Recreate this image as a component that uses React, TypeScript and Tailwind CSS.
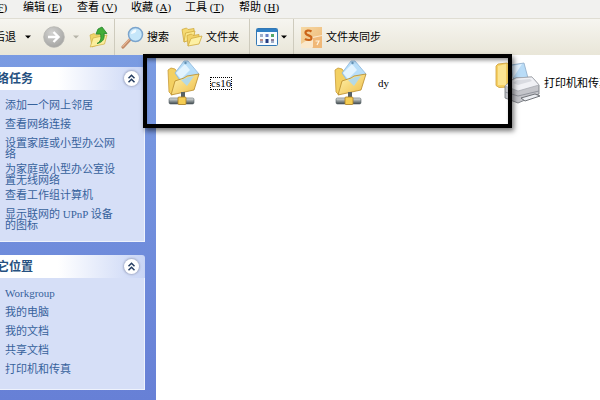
import type { ReactNode } from 'react';

const menus = [
  { label: '文件', hotkey: 'F' },
  { label: '编辑', hotkey: 'E' },
  { label: '查看', hotkey: 'V' },
  { label: '收藏', hotkey: 'A' },
  { label: '工具', hotkey: 'T' },
  { label: '帮助', hotkey: 'H' },
];

const networkTasks = [
  '添加一个网上邻居',
  '查看网络连接',
  '设置家庭或小型办公网络',
  '为家庭或小型办公室设置无线网络',
  '查看工作组计算机',
  '显示联网的 UPnP 设备的图标',
];

const otherPlaces = ['Workgroup', '我的电脑', '我的文档', '共享文档', '打印机和传真'];

function Caret({ muted = false }: { muted?: boolean }) {
  return (
    <svg className={`h-1 w-[6px] shrink-0 ${muted ? 'fill-[#b5b3a8]' : 'fill-black'}`} viewBox="0 0 6 4">
      <path d="M0 .5h6L3 3.5z" />
    </svg>
  );
}

function ForwardIcon() {
  return (
    <svg className="size-[22px]" viewBox="0 0 22 22">
      <defs>
        <radialGradient id="fwd" cx=".4" cy=".3" r=".8">
          <stop offset="0" stopColor="#d2d2d0" />
          <stop offset="1" stopColor="#a0a09e" />
        </radialGradient>
      </defs>
      <circle cx="11" cy="11" r="10.3" fill="url(#fwd)" stroke="#b2b2ae" strokeWidth=".8" />
      <path d="M5 11h10M10.500 6l5 5-5 5" fill="none" stroke="#fff" strokeWidth="2.400" />
    </svg>
  );
}

function UpFolderIcon() {
  return (
    <svg className="h-[22px] w-[19px]" viewBox="0 0 19 22">
      <path d="M1 9l4-1.500L7 9l8-1.500v9L3 21z" fill="#efd568" stroke="#d0ae45" strokeWidth=".7" />
      <path d="M1.200 21L4 12l14-3-2.500 9z" fill="#fbee9c" stroke="#cfae45" strokeWidth=".7" />
      <path d="M8 17.500c3.500-1.500 4.500-5 3.500-9.500H7L9 3l4-2 5 6.500h-3c1 5.500-1.500 9-7 10z" fill="#41ad38" stroke="#23832a" strokeWidth=".8" />
    </svg>
  );
}

function SearchIcon() {
  return (
    <svg className="h-[23px] w-[23px]" viewBox="0 0 23 23">
      <path d="M2 21l7.500-8" stroke="#c08a67" strokeWidth="3.200" strokeLinecap="round" />
      <path d="M1.800 20.300l7-7.500" stroke="#e7b794" strokeWidth="1.200" strokeLinecap="round" />
      <circle cx="14.500" cy="8.500" r="7" fill="#c5e6fa" stroke="#7ba4cc" strokeWidth="1.500" />
      <path d="M10 8c.3-3 2.500-4.500 5-4.500 1 2-1 4-5 4.500z" fill="#f4fbff" />
    </svg>
  );
}

function FoldersIcon() {
  return (
    <svg className="h-[20px] w-[22px]" viewBox="0 0 22 20" stroke="#cfa93f" strokeWidth=".8" strokeLinejoin="round">
      <path d="M1 2.500L5.500 1 7 2.500 13 1.500V10L3 15z" fill="#f5da72" />
      <path d="M3 15L4.500 6l9.500-2-2 8z" fill="#fbe88c" />
      <path d="M6 8.500L10.500 7 12 8.500l6-1V10L7 19z" fill="#f2d268" />
      <path d="M7 19l3-7.500L21 9l-3 8z" fill="#fdf0a4" />
    </svg>
  );
}

function ViewsIcon() {
  return (
    <svg className="h-[18px] w-[22px]" viewBox="0 0 22 18">
      <rect x=".5" y=".5" width="21" height="17" rx="1" fill="#f7fbff" stroke="#3378b5" />
      <path d="M1 1h20v3H1z" fill="#2f7fc3" />
      <path d="M4 6h3v3H4zM4 13h3v2H4zM15 13h3v2h-3z" fill="#9dadc9" />
      <path d="M9.500 6h3v3h-3z" fill="#697fc5" />
      <path d="M15 6h3v3h-3z" fill="#50a668" />
      <path d="M9.500 11h3v4h-3z" fill="#263c80" />
      <path d="M4 11h3v2H4z" fill="#c08b86" />
      <path d="M15 11h3v2h-3z" fill="#8a7d9a" />
    </svg>
  );
}

function SyncIcon() {
  return (
    <svg className="size-[21px]" viewBox="0 0 21 21">
      <defs>
        <linearGradient id="sync" x2="1" y2="1">
          <stop offset="0" stopColor="#f6d9a4" />
          <stop offset="1" stopColor="#edb673" />
        </linearGradient>
      </defs>
      <path d="M0 0h21v21H0z" fill="url(#sync)" />
      <path d="M0 17l11-7 10-2v4L11 21H0z" fill="#fae8cc" />
      <path d="M12 11l9-2v12h-9z" fill="#f0b878" />
      <path d="M10.500 4.500C8 2.800 4.500 3.300 4.500 5.700c0 3 6 2.300 6 5.200 0 2.500-4 2.700-6.500 1" fill="none" stroke="#cb6519" strokeWidth="2.200" />
      <path d="M14.500 14H18l-2 4" fill="none" stroke="#fff4e0" strokeWidth="1.200" />
    </svg>
  );
}

function NetworkFolderIcon() {
  return (
    <svg className="h-[46px] w-[34px] shrink-0" viewBox="0 0 34 46">
      <defs>
        <linearGradient id="folder" x2="1" y2="1">
          <stop offset="0" stopColor="#fff3ae" />
          <stop offset="1" stopColor="#eebd48" />
        </linearGradient>
        <linearGradient id="pipe" x2="0" y2="1">
          <stop offset="0" stopColor="#e5e8e6" />
          <stop offset=".5" stopColor="#91999a" />
          <stop offset="1" stopColor="#3e474a" />
        </linearGradient>
      </defs>
      <path d="M1 10l3-2 4 1 3 4 8 8-14 14-3-3z" fill="#f3d062" stroke="#c89b38" strokeWidth=".8" />
      <path d="M17 1h4l11 13-13 15L8 13z" fill="#b8def9" stroke="#8cb6dc" strokeWidth=".8" />
      <path d="M18 4l5 6-9 9-5-6z" fill="#e3f4ff" />
      <circle cx="18.500" cy="3" r="1.200" fill="#6796bb" />
      <path d="M4 35l4-14 9-3 3-2 12-2-5 16z" fill="url(#folder)" stroke="#b78a29" strokeWidth=".8" strokeLinejoin="round" />
      <path d="M14 20l4-1.500L21 17l6-1-7 10z" fill="#b4d9e6" />
      <path d="M14 32h4v8h-4z" fill="#596264" />
      <rect x="2" y="38" width="25" height="6" rx="1.500" fill="url(#pipe)" stroke="#566065" strokeWidth=".6" />
      <rect x="11" y="37" width="8" height="7.500" rx="1" fill="#f5cd53" stroke="#ac7f22" strokeWidth=".8" />
    </svg>
  );
}

function PrinterIcon() {
  return (
    <svg className="h-[46px] w-[46px] shrink-0" viewBox="0 0 46 46">
      <path d="M1 6l2-2 9-1 3 2v22l-11 .5-3-2z" fill="#f5cf62" stroke="#d1a13b" strokeWidth=".8" />
      <path d="M3 6l8-2v21H3z" fill="#fbe492" />
      <path d="M16 5l13-2 4 15-14 5z" fill="#b9dcf7" stroke="#8facc8" strokeWidth=".8" />
      <path d="M17 6l10-2-9 14z" fill="#e4f3ff" />
      <path d="M10 26l7-6 4-2 16-1 7 8v9L23 43l-13-5z" fill="#c4c5ca" stroke="#70737a" strokeWidth=".8" />
      <path d="M10 26l7-6 4-2 16-1 7 8-21 6z" fill="#f0f1f5" stroke="#a4a6ad" strokeWidth=".7" />
      <path d="M18 23l4-3 13-1 2 2-14 4z" fill="#d9dbe1" />
      <path d="M10 32l13 4 21-5" fill="none" stroke="#93969e" />
      <path d="M26 38l14-4 5 2-15 5z" fill="#eceef2" stroke="#63666c" strokeWidth=".9" />
    </svg>
  );
}

function Separator() {
  return <div className="w-px self-stretch bg-[#cecbbd]" />;
}

function TaskPanel({ title, children }: { title: string; children: ReactNode }) {
  return (
    <section className="mr-[11px]">
      <header className="flex h-[23px] items-center justify-between rounded-tr-[3px] bg-linear-to-r from-white from-40% to-[#c9d5f5] pr-[6px]">
        <h2 className="-ml-[15px] text-[12px] leading-4 font-bold whitespace-nowrap text-[#255080]">{title}</h2>
        <button
          type="button"
          aria-label={`折叠${title}`}
          className="flex size-[15px] items-center justify-center rounded-full bg-white shadow-[0_0_2px_1px_#a5aec9]"
        >
          <svg className="size-[9px]" viewBox="0 0 9 9" fill="none" stroke="#253d62" strokeWidth="1.500">
            <path d="M1.500 4.200l3-3 3 3M1.500 8.200l3-3 3 3" />
          </svg>
        </button>
      </header>
      <div className="border-r border-b border-[#eef2fc] bg-[#d6dff7] pt-[10px] pr-6 pb-[10px] pl-[5px]">{children}</div>
    </section>
  );
}

function LinkList({ items }: { items: string[] }) {
  return (
    <ul className="flex flex-col gap-1">
      {items.map((item) => (
        <li key={item} className="min-h-[15px] text-[11px] leading-[11px] text-[#36629c]">
          <a href="#">{item}</a>
        </li>
      ))}
    </ul>
  );
}

export default function App() {
  return (
    <div className="relative flex min-h-screen flex-col overflow-hidden bg-white font-['Liberation_Serif','Noto_Sans_CJK_SC',serif] text-[11px] text-black">
      {/* Menu bar */}
      <nav className="-ml-[31px] flex h-[18px] items-start gap-4 bg-[#f1f1ef] whitespace-nowrap">
        {menus.map(({ label, hotkey }) => (
          <button key={label} type="button" className="w-[38px] text-left leading-[15px]">
            {label} (<u>{hotkey}</u>)
          </button>
        ))}
      </nav>

      {/* Toolbar */}
      <div className="flex h-[37px] items-center border-t border-[#dfddd3] bg-linear-to-b from-[#f6f5f0] to-[#e9e6d8] whitespace-nowrap">
        <button type="button" className="-ml-[6px] flex items-center gap-[9px]">
          后退
          <Caret />
        </button>
        <button type="button" aria-label="前进" className="ml-3 flex items-center gap-2">
          <ForwardIcon />
          <Caret muted />
        </button>
        <button type="button" aria-label="向上" className="mr-[6px] ml-[10px]">
          <UpFolderIcon />
        </button>
        <Separator />
        <button type="button" className="ml-[6px] flex items-center gap-[3px]">
          <SearchIcon />
          搜索
        </button>
        <button type="button" className="mr-[10px] ml-3 flex items-center gap-[3px]">
          <FoldersIcon />
          文件夹
        </button>
        <Separator />
        <button type="button" aria-label="查看方式" className="mr-[6px] ml-[6px] flex items-center gap-[3px]">
          <ViewsIcon />
          <Caret />
        </button>
        <Separator />
        <button type="button" className="ml-[7px] flex items-center gap-1">
          <SyncIcon />
          文件夹同步
        </button>
      </div>

      <div className="flex flex-1">
        {/* Task pane */}
        <aside className="w-[156px] shrink-0 bg-linear-to-b from-[#7a9be2] to-[#6780d6] pt-3">
          <TaskPanel title="网络任务">
            <LinkList items={networkTasks} />
          </TaskPanel>
          <div className="h-[13px]" />
          <TaskPanel title="其它位置">
            <LinkList items={otherPlaces} />
          </TaskPanel>
        </aside>

        {/* Folder contents */}
        <main className="flex min-w-0 flex-1 items-start overflow-hidden pt-[5px] pl-[11px] whitespace-nowrap">
          <a href="#" className="flex w-[167px] shrink-0 items-center gap-[9px]">
            <NetworkFolderIcon />
            <span className="border border-dotted border-black leading-[11px]">cs16</span>
          </a>
          <a href="#" className="flex w-[161px] shrink-0 items-center gap-[10px]">
            <NetworkFolderIcon />
            <span className="leading-[11px]">dy</span>
          </a>
          <a href="#" className="flex shrink-0 items-center gap-[3px]">
            <PrinterIcon />
            <span className="leading-[11px]">打印机和传真</span>
          </a>
        </main>
      </div>

      {/* Highlight frame over the two shared folders */}
      <div className="pointer-events-none absolute top-[54px] left-[143px] h-[74px] w-[369px] border-4 border-black shadow-[2px_3px_5px_#0008,inset_0_4px_4px_-2px_#0007]" />
    </div>
  );
}
